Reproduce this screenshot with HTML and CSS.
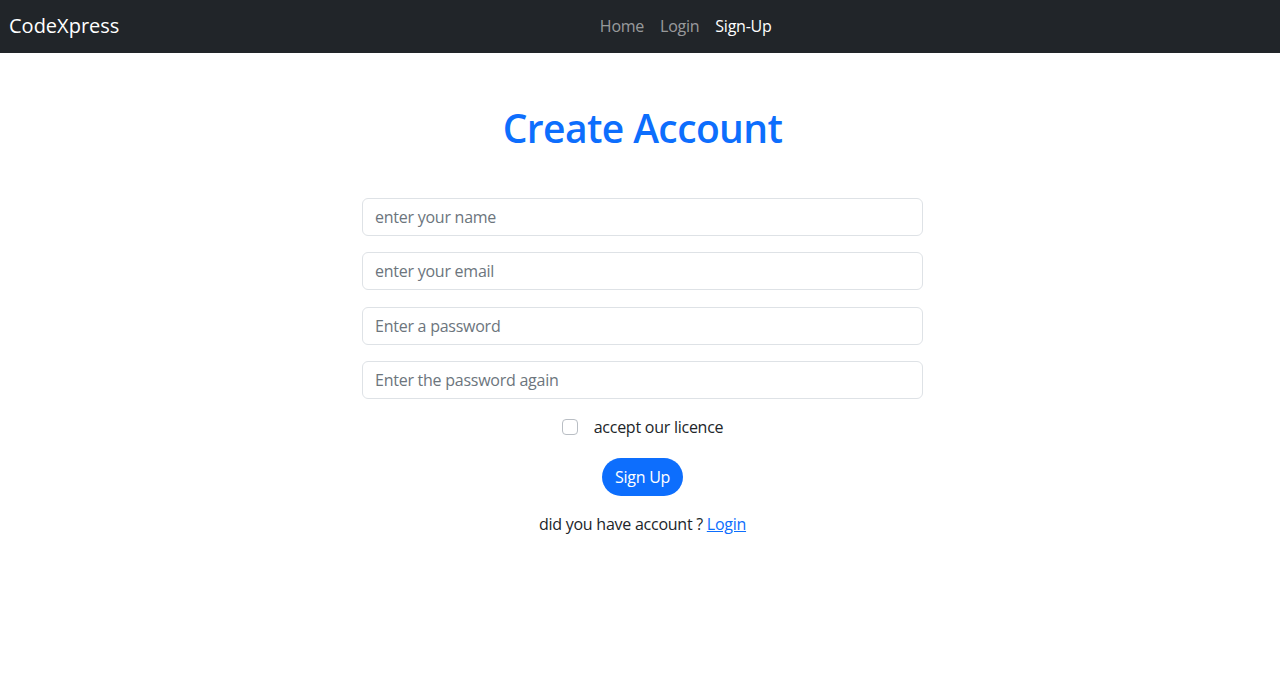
FILE: index.html
```html
<!DOCTYPE html>
<html lang="en">
<head>
<meta charset="utf-8">
<title>CodeXpress - Sign Up</title>
<link rel="stylesheet" href="styles.css">
</head>
<body>
<nav class="navbar">
  <a class="brand" href="#">CodeXpress</a>
  <ul class="nav-links">
    <li><a class="nav-link" href="#">Home</a></li>
    <li><a class="nav-link" href="#">Login</a></li>
    <li><a class="nav-link active" href="#">Sign-Up</a></li>
  </ul>
</nav>
<main class="main">
  <h1 class="title">Create Account</h1>
  <form class="form">
    <input class="field" type="text" placeholder="enter your name">
    <input class="field" type="email" placeholder="enter your email">
    <input class="field" type="password" placeholder="Enter a password">
    <input class="field" type="password" placeholder="Enter the password again">
    <label class="check-row"><span class="check"></span><span class="check-label">accept our licence</span></label>
    <button class="btn" type="button">Sign Up</button>
    <p class="footer-text">did you have account ? <a href="#" class="link">Login</a></p>
  </form>
</main>
</body>
</html>
```
FILE: styles.css
```css
* { box-sizing: border-box; }
body {
  margin: 0;
  font-family: "Open Sans", "Noto Sans", sans-serif;
  font-size: 16px;
  color: #212529;
  background: #fff;
  letter-spacing: -0.25px;
}
.navbar {
  height: 53px;
  background: #212529;
  display: flex;
  align-items: center;
  padding: 0 44px 2px 9px;
}
.brand {
  color: #fff;
  font-size: 20px;
  letter-spacing: 0;
  text-decoration: none;
  margin-right: 16px;
}
.nav-links {
  flex: 1;
  display: flex;
  justify-content: center;
  list-style: none;
  margin: 0;
  padding: 0;
}
.nav-link {
  display: block;
  padding: 8px;
  color: rgba(255,255,255,.55);
  text-decoration: none;
  font-size: 16px;
}
.nav-link.active { color: #fff; }
.main {
  padding-left: 5px;
  display: flex;
  flex-direction: column;
  align-items: center;
}
.title {
  margin: 51px 0 0;
  font-size: 39px;
  line-height: 48px;
  font-weight: 600;
  letter-spacing: -0.6px;
  color: #0d6efd;
}
.form {
  width: 561px;
  margin-top: 46px;
  display: flex;
  flex-direction: column;
  align-items: center;
}
.field {
  width: 100%;
  height: 38px;
  margin-bottom: 16.33px;
  padding: 6px 12px;
  border: 1px solid #dee2e6;
  border-radius: 6px;
  font-family: inherit;
  font-size: 16px;
  letter-spacing: -0.25px;
  color: #212529;
}
.field::placeholder { color: #6c757d; }
.check-row {
  display: flex;
  align-items: center;
  gap: 16px;
  height: 24px;
}
.check {
  width: 16px;
  height: 16px;
  border: 1px solid #b9bec4;
  border-radius: 4px;
  background: #fff;
}
.btn {
  margin-top: 19px;
  height: 38px;
  padding: 0 13px;
  border: none;
  border-radius: 19px;
  background: #0d6efd;
  color: #fff;
  font-family: inherit;
  font-size: 16px;
  letter-spacing: -0.25px;
}
.footer-text {
  margin: 16px 0 0;
  line-height: 24px;
}
.link { color: #0d6efd; }
```
